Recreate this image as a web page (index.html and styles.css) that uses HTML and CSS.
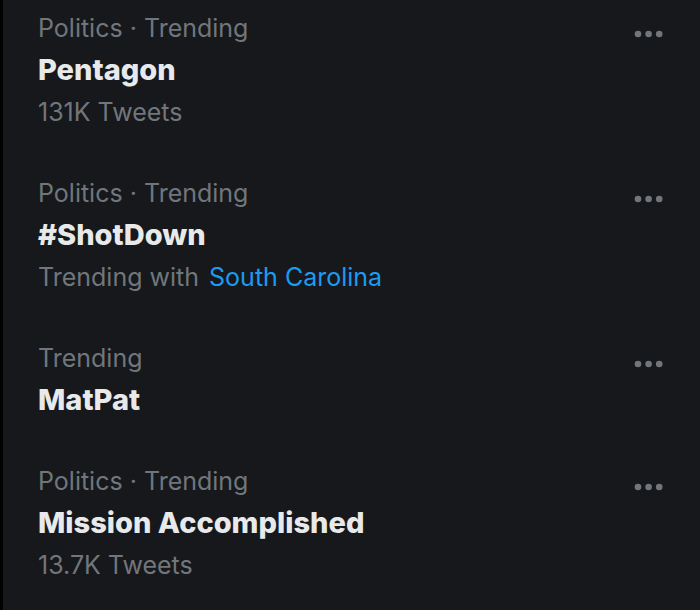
FILE: index.html
```html
<!DOCTYPE html>
<html>
<head>
<meta charset="utf-8">
<link rel="stylesheet" href="styles.css">
</head>
<body>
<div class="list">
  <div class="trend">
    <div class="text">
      <div class="meta">Politics · Trending</div>
      <div class="title">Pentagon</div>
      <div class="meta">131K Tweets</div>
    </div>
    <div class="more"><svg viewBox="0 0 30 8" width="30" height="8"><circle cx="4" cy="4" r="3.3"/><circle cx="14.6" cy="4" r="3.3"/><circle cx="25.2" cy="4" r="3.3"/></svg></div>
  </div>
  <div class="trend">
    <div class="text">
      <div class="meta">Politics · Trending</div>
      <div class="title">#ShotDown</div>
      <div class="meta">Trending with <span class="link">South Carolina</span></div>
    </div>
    <div class="more"><svg viewBox="0 0 30 8" width="30" height="8"><circle cx="4" cy="4" r="3.3"/><circle cx="14.6" cy="4" r="3.3"/><circle cx="25.2" cy="4" r="3.3"/></svg></div>
  </div>
  <div class="trend">
    <div class="text">
      <div class="meta">Trending</div>
      <div class="title">MatPat</div>
    </div>
    <div class="more"><svg viewBox="0 0 30 8" width="30" height="8"><circle cx="4" cy="4" r="3.3"/><circle cx="14.6" cy="4" r="3.3"/><circle cx="25.2" cy="4" r="3.3"/></svg></div>
  </div>
  <div class="trend">
    <div class="text">
      <div class="meta">Politics · Trending</div>
      <div class="title">Mission Accomplished</div>
      <div class="meta">13.7K Tweets</div>
    </div>
    <div class="more"><svg viewBox="0 0 30 8" width="30" height="8"><circle cx="4" cy="4" r="3.3"/><circle cx="14.6" cy="4" r="3.3"/><circle cx="25.2" cy="4" r="3.3"/></svg></div>
  </div>
</div>
</body>
</html>
```
FILE: styles.css
```css
html, body {
  margin: 0;
  padding: 0;
  background: #16181c;
  height: 100%;
}
body {
  font-family: Inter, "Noto Sans", sans-serif;
  border-left: 3px solid #000;
  box-sizing: border-box;
}
.list {
  display: flex;
  flex-direction: column;
}
.trend {
  display: flex;
  justify-content: space-between;
  align-items: flex-start;
  padding: 7px 35px 32px 35px;
}
.meta {
  color: #71767b;
  font-size: 25px;
  line-height: 42px;
}
.title {
  color: #e7e9ea;
  font-size: 29px;
  font-weight: 800;
  line-height: 42px;
}
.link {
  color: #1d9bf0;
  margin-left: 3px;
}
.more {
  padding-top: 23px;
  margin-right: 1px;
}
.more svg {
  display: block;
  fill: #71767b;
}
```
